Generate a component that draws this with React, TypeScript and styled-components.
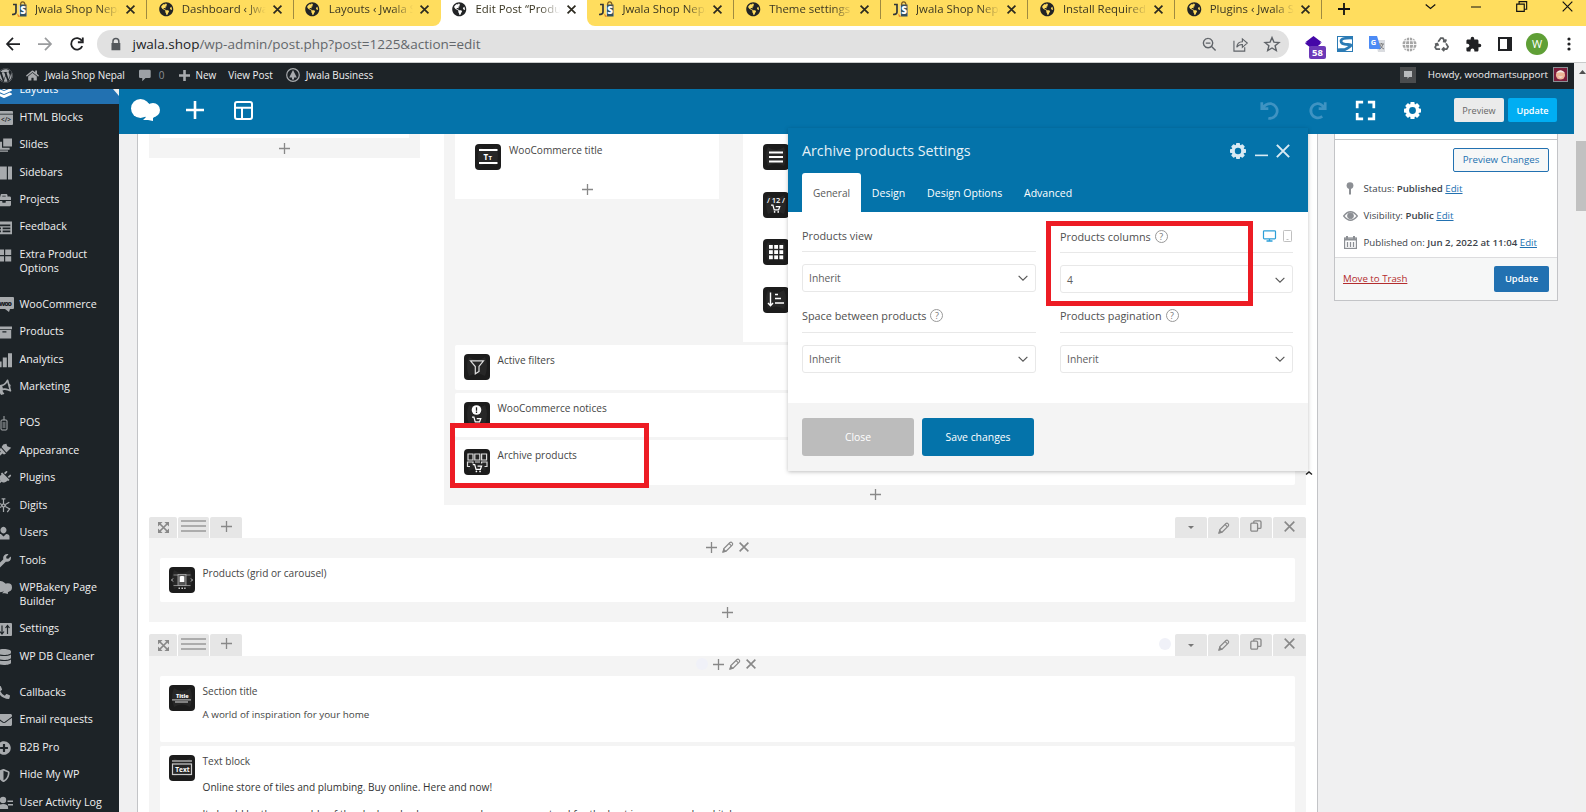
import React from "react";
import styled, { createGlobalStyle, css } from "styled-components";
import {
  FaBullhorn, FaDatabase, FaEnvelope, FaHome, FaLayerGroup, FaPhoneAlt, FaPlug, FaPlusCircle,
  FaShieldAlt, FaWordpress, FaWrench, FaGlobeAmericas, FaBriefcase,
} from "react-icons/fa";
import { MdExtension } from "react-icons/md";

const BLUE = "#0473aa";
const INK = "#1d2327";

const Global = createGlobalStyle`
  * { box-sizing: border-box; }
  body { margin: 0; overflow: hidden; font-family: "Open Sans", "Noto Sans", sans-serif; }
  svg { display: block; flex: none; overflow: visible; }
`;

const Page = styled.div`
  width: 1586px; height: 812px; overflow: hidden; display: flex; flex-direction: column; background: #fff;
`;

/* ---------- browser chrome ---------- */
const TabStrip = styled.div`display: flex; height: 26px; background: #fff; flex: none;`;
const TabGroup = styled.div<{ $side: "left" | "right" }>`
  display: flex; background: #ffdd5e;
  ${(p) => (p.$side === "left" ? "border-radius: 0 0 8px 0;" : "border-radius: 0 0 0 8px; flex: 1;")}
`;
const Tab = styled.div<{ $last?: boolean }>`
  position: relative; display: flex; align-items: center; width: 146.85px; height: 18px; padding-left: 11px; flex: none;
  &::after { content: ""; position: absolute; right: 0; top: 0; width: 1px; height: 19px; background: #9f8a40; display: ${(p) => (p.$last ? "none" : "block")}; }
`;
const TabTitle = styled.span`
  width: 84px; margin: 0 7px 0 8px; overflow: hidden; white-space: nowrap; font-size: 11.4px; line-height: 18px; color: #3b3723;
  mask-image: linear-gradient(90deg, #000 76%, transparent 100%);
`;
const TabIcon = styled.span`width: 16px; display: flex; justify-content: center;`;
const WindowButtons = styled.div`
  display: flex; margin-left: auto; padding: 0 13px 0 0; height: 13px; align-items: center; gap: 35px;
`;
const NewTab = styled.div`display: flex; align-items: center; height: 18px; padding-left: 16px;`;

const Toolbar = styled.div`
  display: flex; align-items: center; height: 37px; flex: none; border-bottom: 1px solid #c9cbcb; background: #fff; padding: 0 9px 0 6px;
`;
const NavButtons = styled.div`display: flex; gap: 18px; width: 93px; align-items: center;`;
const Omnibox = styled.div`
  display: flex; align-items: center; width: 1192px; height: 28px; border-radius: 14px; background: #e1e1e1; padding: 0 9px 0 13px; flex: none;
`;
const Url = styled.span`
  margin-left: 8.5px; font-size: 13.5px; line-height: 20px; color: #63676b; white-space: nowrap; flex: 1;
  b { font-weight: 400; color: #202124; }
`;
const OmniActions = styled.div`display: flex; gap: 16px; align-items: center;`;
const Extensions = styled.div`display: flex; gap: 16px; align-items: center; padding-left: 16px;`;
const ExtSlot = styled.div`position: relative; width: 16px; height: 16px; display: flex; align-items: center; justify-content: center;`;
const Badge = styled.span`
  position: absolute; left: 4px; top: 10px; width: 17px; height: 13px; border-radius: 2px; background: #6c39b8; color: #fff;
  font-size: 9.5px; font-weight: 700; line-height: 13px; text-align: center;
`;
const Profile = styled.div`
  width: 22px; height: 22px; margin: 0 -3px; border-radius: 50%; background: #5f9f36; color: #fff; font-size: 11px; line-height: 22px; text-align: center; flex: none;
`;

/* ---------- page shell ---------- */
const Viewport = styled.div`display: flex; flex: 1; min-height: 0;`;
const Site = styled.div`position: relative; width: 1574px; display: flex; flex-direction: column;`;
const Scrollbar = styled.div`
  width: 12px; background: #f0f0f0; display: flex; flex-direction: column; align-items: flex-end; padding-top: 7px;
`;
const ScrollThumb = styled.div`width: 10px; height: 70px; margin-top: 67px; background: #c1c1c1;`;

const AdminBar = styled.div`
  display: flex; align-items: center; height: 26px; padding-bottom: 1.5px; flex: none; background: ${INK}; color: #f0f0f1; font-size: 9.95px; line-height: 24px; white-space: nowrap;
`;
const AdminItem = styled.div<{ $gap?: number; $at?: number; $dim?: boolean }>`
  display: flex; align-items: center; gap: ${(p) => p.$gap ?? 6}px; margin-right: ${(p) => p.$at ?? 12}px;
  ${(p) => p.$dim && "color: #8c9095;"}
`;
const AccountItem = styled.div`display: flex; align-items: center; margin-left: auto; font-size: 9.8px;`;
const Chat = styled.div`
  width: 16px; height: 16px; margin-right: 12px; background: #4a4c4e; display: flex; align-items: center; justify-content: center;
`;
const Avatar = styled.div`
  width: 15px; height: 15px; margin: 0 6px 1px 5px; border: 1px solid #8c9095; background: #7c1d3b; display: flex; align-items: center; justify-content: center;
`;
const Body = styled.div`display: flex; flex: 1; min-height: 0;`;

/* ---------- admin menu ---------- */
const Sidebar = styled.nav`position: relative; width: 119px; background: ${INK}; overflow: hidden; flex: none;`;
const MenuList = styled.div`margin-top: -12.5px;`;
const MenuItem = styled.div<{ $active?: boolean; $spaced?: boolean }>`
  display: flex; gap: 7px; padding: 6.72px 0 6.72px 2px; margin-left: -7.5px; width: 126.5px;
  font-size: 10.7px; line-height: 13.95px; color: #f0f0f1;
  ${(p) => p.$active && css`background: #2271b1; color: #fff;`}
  ${(p) => p.$spaced && css`margin-top: 8.7px;`}
`;
const MenuIcon = styled.span`
  width: 18px; height: 14px; display: flex; align-items: center; justify-content: center; color: #a7aaad; flex: none;
`;
const MenuNotch = styled.span`
  position: absolute; right: 0; top: 0; width: 0; height: 0; border-style: solid; border-width: 0 6px 7px 0; border-color: transparent #f0f0f1 transparent transparent;
`;

/* ---------- builder ---------- */
const Editor = styled.div`display: flex; flex-direction: column; flex: 1; background: #f0f0f1; overflow: hidden;`;
const BuilderNav = styled.div`
  display: flex; align-items: center; height: 45px; flex: none; background: ${BLUE}; padding: 0 17px 3px 12px;
`;
const NavLeft = styled.div`display: flex; align-items: center; gap: 26px; flex: 1; svg:last-child { margin-left: 3.5px; }`;
const NavRight = styled.div`display: flex; align-items: center; gap: 29px; padding-right: 33px;`;
const NavButton = styled.button<{ $primary?: boolean }>`
  border: 0; padding: 2px 0 0; height: 24px; width: ${(p) => (p.$primary ? 49 : 50)}px; margin-left: ${(p) => (p.$primary ? 4 : 0)}px;
  border-radius: 2px; font: 9.1px/22px "Open Sans", sans-serif; font-weight: ${(p) => (p.$primary ? 600 : 400)};
  background: ${(p) => (p.$primary ? "#00aef3" : "#ebebeb")}; color: ${(p) => (p.$primary ? "#fff" : "#666")};
`;
const Work = styled.div`display: flex; align-items: flex-start; gap: 16px; padding-left: 18px; flex: 1; min-height: 0;`;
const Canvas = styled.main`
  width: 1181px; height: 678px; padding: 0 11px; background: #fff; border: solid #c3c4c7; border-width: 0 1px; overflow: hidden;
`;
const Columns = styled.div`display: flex; gap: 24px; align-items: flex-start;`;
const SideColumn = styled.div`
  width: 271px; height: 24px; padding: 0 11px; background: #f4f4f4; display: flex; flex-direction: column; align-items: center; gap: 5px;
  &::before { content: ""; align-self: stretch; height: 4px; background: #fff; flex: none; }
`;
const MainColumn = styled.div`
  flex: 1; height: 371px; padding: 0 11px; background: #f4f4f4; display: flex; flex-direction: column;
`;
const InnerRow = styled.div`display: flex; gap: 24px; height: 211px; align-items: flex-start;`;
const InnerColumn = styled.div<{ $w: number; $h: number; $gap: number }>`
  width: ${(p) => p.$w}px; height: ${(p) => p.$h}px; background: #fff; padding: 10px 20px 0;
  display: flex; flex-direction: column; gap: ${(p) => p.$gap}px;
`;
const Cards = styled.div<{ $gap: number }>`display: flex; flex-direction: column; gap: ${(p) => p.$gap}px;`;
const Card = styled.section<{ $h: number }>`
  display: flex; gap: 7.5px; height: ${(p) => p.$h}px; padding: 9px; background: #fff; border-radius: 2px; overflow: hidden; flex: none;
`;
const Element = styled.div`display: flex; gap: 8px;`;
const ElementIcon = styled.span`
  width: 26px; height: 26px; border-radius: 4px; background: #1c1c1c; display: flex; align-items: center; justify-content: center; flex: none; overflow: hidden;
`;
const ElementText = styled.div`display: flex; flex-direction: column; white-space: nowrap;`;
const ElementTitle = styled.div`font-size: 10.1px; font-weight: 500; line-height: 12px; height: 13px; color: #454545;`;
const ElementBody = styled.div<{ $top: number; $bold?: boolean }>`
  margin-top: ${(p) => p.$top}px; font-size: ${(p) => (p.$bold ? 10.15 : 9.85)}px; line-height: 14px; color: ${(p) => (p.$bold ? "#333" : "#444")};
`;
const Adder = styled.div<{ $h: number }>`
  display: flex; justify-content: center; align-items: center; height: ${(p) => p.$h}px;
`;
const RowBar = styled.div<{ $h: number }>`
  display: flex; align-items: stretch; gap: 1px; height: ${(p) => p.$h}px; margin-top: 12px;
`;
const RowButton = styled.span<{ $w: number; $lift?: boolean }>`
  width: ${(p) => p.$w}px; background: #e6e6e6; border-radius: 2px 2px 0 0; display: flex; align-items: center; justify-content: center;
  padding-bottom: ${(p) => (p.$lift ? 2.5 : 0)}px;
`;
const RowSpacer = styled.span`flex: 1; display: flex; justify-content: flex-end; align-items: center; padding: 0 3px 3px 0;`;
const Spot = styled.i`width: 12px; height: 12px; border-radius: 50%; background: #f0f1f8; display: block;`;
const RowSection = styled.div`background: #f4f4f4; padding: 0 11px;`;
const ColumnTools = styled.div<{ $spot?: boolean }>`
  display: flex; justify-content: center; align-items: center; gap: 5px; height: 20px; padding-bottom: ${(p) => (p.$spot ? 4 : 2)}px; padding-right: ${(p) => (p.$spot ? 3 : 0)}px;
`;

/* ---------- publish box ---------- */
const Publish = styled.aside`
  width: 224px; height: 167px; border: 1px solid #c3c4c7; border-top: 0; background: #fff; color: #3c434a; font-size: 9.7px; display: flex; flex-direction: column;
  &::before { content: ""; height: 5px; border-bottom: 1px solid #c3c4c7; flex: none; }
`;
const PublishBody = styled.div`flex: 1; padding: 8px 8px 0; display: flex; flex-direction: column;`;
const OutlineButton = styled.button`
  align-self: flex-end; width: 96px; height: 24px; border: 1px solid #2271b1; border-radius: 2px; background: #f6f7f7; color: #2271b1;
  padding: 0; font: 9.7px/20px "Open Sans", sans-serif; margin-bottom: 3px;
`;
const Fact = styled.div`
  display: flex; align-items: center; gap: 6.5px; height: 27px; white-space: nowrap;
  b { font-weight: 550; }
  span:last-child { padding-bottom: 1px; }
`;
const FactIcon = styled.span`width: 14px; display: flex; justify-content: center;`;
const Link = styled.a<{ $danger?: boolean }>`text-decoration: underline; color: ${(p) => (p.$danger ? "#b32d2e" : "#2271b1")};`;
const PublishFoot = styled.div`
  display: flex; justify-content: space-between; align-items: center; height: 43px; border-top: 1px solid #dcdcde; background: #f6f7f7; padding: 0 8px 1px;
`;
const SolidButton = styled.button`
  width: 55px; height: 26px; border: 0; border-radius: 2px; background: #2271b1; color: #fff; padding: 0; font: 600 9.4px/26px "Open Sans", sans-serif;
`;

/* ---------- settings window ---------- */
const Panel = styled.div`
  position: absolute; left: 788px; top: 65px; width: 520px; height: 343px; display: flex; flex-direction: column; background: #fff; box-shadow: 0 1px 4px rgba(0, 0, 0, 0.25);
`;
const PanelHead = styled.header`height: 84px; background: ${BLUE}; padding: 0 15px 0 14px; display: flex; flex-direction: column;`;
const PanelTitle = styled.div`
  display: flex; align-items: center; height: 45px; color: #e6f1f7; font-size: 14.25px; span { flex: 1; }
`;
const PanelTools = styled.div`display: flex; align-items: center; gap: 8.5px; margin-right: 3px;`;
const PanelTabs = styled.div`display: flex; height: 39px;`;
const PanelTab = styled.div<{ $active?: boolean }>`
  padding: 0 10.9px; line-height: 40px; font-size: 10.55px; font-weight: 500; color: #fff; border-radius: 3px 3px 0 0;
  ${(p) => p.$active && css`background: #fff; color: #5a5a5a; font-weight: 400; font-size: 10.1px;`}
`;
const PanelBody = styled.div`
  height: 191px; padding: 0 15px 0 14px; display: grid; grid-template-columns: 234px 233px; column-gap: 24px; grid-template-rows: 81px 81px;
`;
const Field = styled.div<{ $top: number }>`padding-top: ${(p) => p.$top}px;`;
const FieldLabel = styled.div<{ $low?: boolean }>`
  display: flex; align-items: center; gap: 4px; height: 32px; padding-bottom: ${(p) => (p.$low ? 0.5 : 2)}px; border-bottom: 1px solid #e8e8e8; font-size: 10.85px; color: #505050; white-space: nowrap;
`;
const Help = styled.span`
  width: 13px; height: 13px; border: 1px solid #999; border-radius: 50%; font-size: 9px; line-height: 11px; text-align: center; color: #777;
`;
const Devices = styled.span`display: flex; gap: 7px; margin: 0 1px 0 auto; align-items: center;`;
const Select = styled.div<{ $low?: boolean }>`
  display: flex; align-items: center; justify-content: space-between; height: 28px; margin-top: 12px; padding: ${(p) => (p.$low ? 2 : 0)}px 7px 0 6px; border: 1px solid #e8e8e8; border-radius: 3px;
  font-size: 10.3px; color: #606060;
`;
const PanelFoot = styled.footer`flex: 1; background: #f4f4f4; padding: 15px 14px; display: flex; gap: 8px;`;
const PanelButton = styled.button<{ $primary?: boolean }>`
  width: 112px; height: 38px; border: 0; border-radius: 3px; padding: 0; color: #fff; background: ${(p) => (p.$primary ? BLUE : "#bcbcbc")};
  font: 10.4px/38px "Open Sans", sans-serif; font-weight: ${(p) => (p.$primary ? 500 : 400)};
`;
const Highlight = styled.div<{ $x: number; $y: number; $w: number; $h: number }>`
  position: absolute; left: ${(p) => p.$x}px; top: ${(p) => p.$y}px; width: ${(p) => p.$w}px; height: ${(p) => p.$h}px; border: 5px solid #ed1c24;
`;
const Corner = styled.div`position: absolute; left: 1305px; top: 408px;`;

/* ---------- drawings ---------- */
const Stroke = ({ d, s = 16, w = 1.5, c = "currentColor" }: { d: string; s?: number; w?: number; c?: string }) => (
  <svg width={s} height={s} viewBox="0 0 16 16" fill="none" stroke={c} strokeWidth={w}><path d={d} /></svg>
);
const Fill = ({ d, s = 18, c = "currentColor", vb = 20 }: { d: string; s?: number; c?: string; vb?: number }) => (
  <svg width={s} height={s} viewBox={`0 0 ${vb} ${vb}`} fill={c} fillRule="evenodd"><path d={d} /></svg>
);
const Plus = ({ s = 11, c = "#888", w = 1.3 }: { s?: number; c?: string; w?: number }) => <Stroke d="M8 0V16M0 8H16" s={s} w={(w * 16) / s} c={c} />;
const Cross = ({ s = 10, c = "#888", w = 1.6 }: { s?: number; c?: string; w?: number }) => <Stroke d="M1 1L15 15M15 1L1 15" s={s} w={(w * 16) / s} c={c} />;
const Chevron = () => <Stroke d="M1 4.5L8 11.5L15 4.5" s={10} w={1.8} c="#555" />;
const Pencil = () => (
  <svg width="12" height="12" viewBox="0 0 12 12" fill="none" stroke="#888" strokeWidth="1.2">
    <path d="M1.2 10.8L1.9 7.6L8 1.5Q9 .6 10 1.6Q11.2 2.6 10.4 3.8L4.3 9.9Z" /><path d="M1 11L3.6 10.4L1.8 8.4Z" fill="#888" /><path d="M7.2 2.6L9.2 4.6" />
  </svg>
);
const Copy = () => (
  <svg width="12" height="12" viewBox="0 0 12 12" fill="none" stroke="#888" strokeWidth="1.3">
    <rect x=".8" y="3.2" width="6.8" height="8" rx="1.2" /><path d="M3.8 3V2Q3.8 .8 5 .8H9.8Q11 .8 11 2V7.2Q11 8.4 9.8 8.4H7.8" />
  </svg>
);
const Expand = () => (
  <svg width="11" height="11" viewBox="0 0 11 11" fill="#888" stroke="#888">
    <path d="M2 2L9 9M9 2L2 9" strokeWidth="1.7" /><path stroke="none" d="M0 0H4.6L0 4.6ZM11 0V4.6L6.4 0ZM0 11V6.4L4.6 11ZM11 11H6.4L11 6.4Z" />
  </svg>
);
const Lines = () => <svg width="25" height="12" stroke="#999" strokeWidth="1.3"><path d="M0 1H25M0 6H25M0 11H25" /></svg>;
const Gear = ({ s, c }: { s: number; c: string }) => (
  <svg width={s} height={s} viewBox="-8 -8 16 16" fill={c}>
    {[0, 45, 90, 135].map((a) => <rect key={a} x="-2" y="-8" width="4" height="16" rx=".8" transform={`rotate(${a})`} />)}
    <circle r="4.6" fill="none" stroke={c} strokeWidth="3.6" /><circle r="3.2" fill={BLUE} />
  </svg>
);
const Bakery = ({ w, c }: { w: number; c: string }) => (
  <svg width={w} height={w * 0.76} viewBox="0 0 29 22" fill={c}>
    <circle cx="9.5" cy="9.5" r="9.5" /><circle cx="22" cy="11" r="7" /><path d="M8 15L22 8L25 17L22 19V22L17 21L12 21L15 18Z" /><circle cx="15" cy="8" r="4.5" />
  </svg>
);
const Globe = () => <FaGlobeAmericas size={14.5} color="#222426" />;
const JsLogo = () => (
  <svg width="17" height="16" viewBox="0 0 17 16">
    <path d="M7.500 4L15 3L16 15H8.500Z" fill="#d9d4bd" /><path d="M9 3.500H15.500V15.500H9Z" fill="#33505f" /><path d="M9.500 4.500Q9.500 .8 11.700 .8T14 4.500" fill="none" stroke="#7b5a20" strokeWidth="1.300" />
    <path d="M6 12.500L9.500 15.500L7 16Z" fill="#e8892c" />
    <path d="M2 3.500H5V11Q5 13.500 1 13.500" fill="none" stroke="#33373a" strokeWidth="1.700" />
    <text x="9.300" y="13" fontSize="10" fontWeight="800" fontFamily="Open Sans, sans-serif" fill="#fff">S</text>
  </svg>
);
const Cart = ({ x, y, k = 1 }: { x: number; y: number; k?: number }) => (
  <g transform={`translate(${x} ${y}) scale(${k})`}>
    <path d="M0 .7H2L3.4 5.6H8L9.2 2.3H5" fill="none" stroke="#fff" strokeWidth="1.3" /><circle cx="3.8" cy="7.8" r=".9" fill="#fff" /><circle cx="7.6" cy="7.8" r=".9" fill="#fff" />
  </g>
);
const art: Record<string, React.ReactNode> = {
  title: <><path d="M4 6H22.5M4 19H22.5" stroke="#fff" strokeWidth="2" /><text x="8.5" y="16" fontSize="8" fontWeight="700" fill="#fff">T</text><text x="13.5" y="16" fontSize="6" fontWeight="700" fill="#fff">T</text></>,
  menu: <path d="M6 8.5H20M6 13H20M6 17.5H20" stroke="#fff" strokeWidth="2" />,
  count: <><text x="4" y="10.5" fontSize="7.6" fontWeight="600" fill="#fff" textLength="18">/ 12 /</text><Cart x={8} y={12.5} k={0.95} /></>,
  grid: <>{[6, 11.2, 16.4].map((x) => [6, 11.2, 16.4].map((y) => <rect key={x + "-" + y} x={x} y={y} width="3.8" height="3.8" fill="#fff" />))}</>,
  sort: <path d="M7.5 5.5V18.5M5 16L7.5 18.7L10 16M12 7.5H15M12 11.5H18M12 16H21" fill="none" stroke="#fff" strokeWidth="1.4" />,
  filter: <path d="M6.5 6.8H19.5L15 12.5V17.5L11.3 19.8V12.5Z" fill="none" stroke="#ddd" strokeWidth="1.2" />,
  notice: <><circle cx="12.5" cy="8" r="4.8" fill="#fff" /><path d="M12.5 5.2V8.8M12.5 9.6V11" stroke="#1c1c1c" strokeWidth="1.3" /><Cart x={8} y={14.5} k={0.95} /></>,
  archive: <><path d="M4 5H9V11H4ZM10.8 5H15.8V11H10.8ZM17.6 5H22.6V11H17.6ZM3.500 18V13H9V14.500M11 13H16M23 18V13H17.600V14.500M3.500 17.500H6M20.500 17.500H23" fill="none" stroke="#ddd" strokeWidth="1.2" /><Cart x={8.8} y={15} k={0.95} /></>,
  carousel: <><path d="M4.5 8H21.5M4.5 18.5H21.5" stroke="#888" /><rect x="9" y="7.5" width="8" height="11" fill="#555" stroke="#aaa" strokeWidth=".8" /><path d="M10.7 9.5L12 9L14 9L15.3 9.5V15H10.7Z" fill="#fff" /><path d="M4 11.5L2.5 13L4 14.5M22 11.5L23.5 13L22 14.5" fill="none" stroke="#ccc" /><path d="M9.5 21.3H11M12.4 21.3H14M15.2 21.3H16.6" stroke="#ccc" strokeWidth="1.5" /></>,
  section: <><text x="7" y="12.5" fontSize="5.5" fontWeight="800" fill="#fff">Title</text><path d="M3 14.8H22" stroke="#aaa" strokeWidth="1.2" /><path d="M6 17H19" stroke="#ddd" strokeWidth="1.2" /></>,
  text: <><path d="M3 6H23" stroke="#aaa" strokeWidth="1.6" /><rect x="3.5" y="9" width="19" height="10.5" fill="none" stroke="#ccc" strokeWidth="1.2" /><text x="6.3" y="17" fontSize="6.6" fontWeight="700" fill="#fff">Text</text></>,
};
const ElIcon = ({ kind }: { kind: string }) => (
  <ElementIcon><svg width="26" height="26" viewBox="0 0 26 26" fontFamily="Open Sans, sans-serif"><path d="M5 3Q13 9 21 3Q25 12 21 22Q13 17 5 22Q1 12 5 3Z" fill="#272727" />{art[kind]}</svg></ElementIcon>
);

/* ---------- data ---------- */
const menu: { label: string; icon: React.ReactNode; active?: boolean; spaced?: boolean }[] = [
  { label: "Layouts", icon: <FaLayerGroup size={16} color="#fff" />, active: true },
  { label: "HTML Blocks", icon: <svg width="18" height="14" viewBox="0 0 18 14"><rect width="18" height="14" rx="1" fill="#a7aaad" /><path d="M0 3.2H18" stroke={INK} strokeWidth=".8" /><text x="6" y="11" fontSize="6.5" fontWeight="600" fill={INK}>{"</>"}</text></svg> },
  { label: "Slides", icon: <Fill d="M9 2H20V12H9ZM5 6H7.500V13.500H17V16H5ZM0 17H15V18.500H0Z" s={16} /> },
  { label: "Sidebars", icon: <Fill d="M2 2H13.500V18H2ZM15 2H20V18H15Z" s={16} /> },
  { label: "Projects", icon: <FaBriefcase size={14} /> },
  { label: "Feedback", icon: <Fill d="M1 3H20V18H1ZM3 6.500V8.500H18V6.500ZM3 10V12H7V10ZM9 10V12H18V10ZM3 13.500V15.500H7V13.500ZM9 13.500V15.500H18V13.500Z" s={17} /> },
  { label: "Extra Product Options", icon: <Fill d="M2 3H10V10H2ZM11.500 3H19V10H11.500ZM2 11.500H10V18H2ZM11.500 11.500H19V18H11.500Z" s={16} /> },
  { label: "WooCommerce", spaced: true, icon: <svg width="20" height="15" viewBox="0 0 20 15"><path d="M1 0H19Q20 0 20 1V11Q20 12 19 12H16L15 15L11 12H1Z" fill="#a7aaad" /><text x="5" y="8.500" fontSize="7" fontWeight="800" fill={INK} textLength="13">woo</text></svg> },
  { label: "Products", icon: <Fill d="M1 3H20V6.500H1ZM2 7.500H19V18H2ZM8 9.200V10.500H13V9.200Z" s={16} /> },
  { label: "Analytics", icon: <Fill d="M2 12H7V19H2ZM8.500 7H13.500V19H8.500ZM15 1.500H20V19H15Z" s={16} /> },
  { label: "Marketing", icon: <FaBullhorn size={15} style={{ transform: "rotate(-15deg)" }} /> },
  { label: "POS", spaced: true, icon: <svg width="8" height="15" viewBox="0 0 8 15"><rect x="1" y="4" width="6" height="10" rx="1" fill="none" stroke="#a7aaad" /><path d="M4 0V4M2.500 7H5.500M2.500 9H5.500M2.500 11H5.500" stroke="#a7aaad" /></svg> },
  { label: "Appearance", icon: <Fill d="M9 2L13 1L14 4L19 6L13 12L7 5ZM6 6L12.500 13L10 14.500L8 13L2 19L0 17L6 11L4.500 8.500Z" s={16} /> },
  { label: "Plugins", icon: <FaPlug size={14} style={{ transform: "rotate(45deg)" }} /> },
  { label: "Digits", icon: <Stroke d="M8 1V6M8 10V15M1.800 4.500L6 7M10 9L14.200 11.500M14.200 4.500L10 7M6 9L1.800 11.500M6 1H10M1 11L4 15M15 11L12 15M8 6L10 8L8 10L6 8Z" s={15} w={1.3} /> },
  { label: "Users", icon: <Fill d="M10 1A4 4.500 0 1 1 9.900 1ZM2 18V14Q2 10.500 6.500 10.500L10 14L13.500 10.500Q18 10.500 18 14V18Z" s={15} /> },
  { label: "Tools", icon: <FaWrench size={14} /> },
  { label: "WPBakery Page Builder", icon: <Bakery w={17} c="#a7aaad" /> },
  { label: "Settings", icon: <svg width="17" height="15" viewBox="0 0 17 15"><rect width="17" height="13" y="1" rx="1" fill="#a7aaad" /><path d="M7 3.500V12M5 9.500L7 12L9 9.500M12.500 12V3.500M10.500 6L12.500 3.500L14.500 6" fill="none" stroke={INK} strokeWidth="1.200" /></svg> },
  { label: "WP DB Cleaner", icon: <FaDatabase size={16} /> },
  { label: "Callbacks", spaced: true, icon: <FaPhoneAlt size={13} /> },
  { label: "Email requests", icon: <FaEnvelope size={16} /> },
  { label: "B2B Pro", icon: <FaPlusCircle size={14} /> },
  { label: "Hide My WP", icon: <FaShieldAlt size={13} /> },
  { label: "User Activity Log", icon: <svg width="18" height="14" viewBox="0 0 18 14" fill="#a7aaad"><circle cx="8" cy="4" r="3.200" /><path d="M2 13Q2 8 8 8T13 13Z" /><path d="M12.500 4.500H18V6H12.500ZM13 8H18V9.500H13Z" /></svg> },
];

const BrowserTab = ({ title, js, last }: { title: string; js?: boolean; last?: boolean }) => (
  <Tab $last={last}><TabIcon>{js ? <JsLogo /> : <Globe />}</TabIcon><TabTitle>{title}</TabTitle><Cross s={9} c="#2c2a20" w={1.7} /></Tab>
);

const BuilderRow = ({ h, spot, children }: { h: number; spot?: boolean; children: React.ReactNode }) => (
  <>
    <RowBar $h={h}>
      <RowButton $w={28}><Expand /></RowButton>
      <RowButton $w={31} $lift><Lines /></RowButton>
      <RowButton $w={32} $lift><Plus /></RowButton>
      <RowSpacer>{spot && <Spot />}</RowSpacer>
      <RowButton $w={32}><svg width="6" height="3"><path d="M0 0H6L3 3Z" fill="#777" /></svg></RowButton>
      <RowButton $w={31}><Pencil /></RowButton>
      <RowButton $w={32} $lift><Copy /></RowButton>
      <RowButton $w={33} $lift><Cross s={11} /></RowButton>
    </RowBar>
    <RowSection>
      <ColumnTools $spot={spot}>{spot && <Spot />}<Plus /><Pencil /><Cross s={10} /></ColumnTools>
      {children}
    </RowSection>
  </>
);

const Pick = ({ label, value, top, help, devices, low }: { label: string; value: string; top: number; help?: boolean; devices?: boolean; low?: boolean }) => (
  <Field $top={top}>
    <FieldLabel $low={low}>
      {label}{help && <Help>?</Help>}
      {devices && (
        <Devices>
          <svg width="13" height="12" fill="none" stroke="#2d9fd8"><rect x=".5" y=".8" width="12" height="8" rx=".8" strokeWidth="1.2" /><path d="M3.5 11H9.5M6.5 9V11" strokeWidth="1.3" /></svg>
          <svg width="9" height="12" fill="none" stroke="#c0c0c0"><rect x=".5" y=".5" width="8" height="11" rx=".8" /><path d="M3.5 9.5H5.5" /></svg>
        </Devices>
      )}
    </FieldLabel>
    <Select $low={devices}>{value}<Chevron /></Select>
  </Field>
);

export default function App() {
  return (
    <Page>
      <Global />
      <TabStrip>
        <TabGroup $side="left">
          <BrowserTab title="Jwala Shop Nepal" js /><BrowserTab title="Dashboard ‹ Jwala" /><BrowserTab title="Layouts ‹ Jwala Shop" last />
        </TabGroup>
        <BrowserTab title="Edit Post “Products" last />
        <TabGroup $side="right">
          <BrowserTab title="Jwala Shop Nepal" js /><BrowserTab title="Theme settings" /><BrowserTab title="Jwala Shop Nepal" js />
          <BrowserTab title="Install Required" /><BrowserTab title="Plugins ‹ Jwala Shop" />
          <NewTab><Plus s={12} c="#111" w={1.8} /></NewTab>
          <WindowButtons>
            <Stroke d="M1 5L8 11L15 5" s={11} w={1.7} c="#111" />
            <Stroke d="M0 8H16" s={10} w={1.6} c="#111" />
            <Stroke d="M1 4.5H12V15H1ZM4.5 4V1H15.5V12H12" s={11} w={1.7} c="#111" />
            <Cross s={11} c="#111" w={1.2} />
          </WindowButtons>
        </TabGroup>
      </TabStrip>
      <Toolbar>
        <NavButtons>
          <Stroke d="M16 8H1.5M8 1L1.2 8L8 15" s={14} w={2} c="#202124" />
          <Stroke d="M0 8H14.5M8 1L14.8 8L8 15" s={14} w={2} c="#9a9c9e" />
          <Stroke d="M14 10.5A6.6 6.6 0 1 1 13.5 4.2M14.6 .5V6H9" s={14} w={2.1} c="#202124" />
        </NavButtons>
        <Omnibox>
          <Fill d="M3 8V6A5 5 0 0 1 13 6V8H14V18H2V8ZM5 8H11V6A3 3 0 0 0 5 6Z" s={14} vb={19} c="#54585c" />
          <Url><b>jwala.shop</b>/wp-admin/post.php?post=1225&amp;action=edit</Url>
          <OmniActions>
            <Stroke d="M6.5 1.5A5 5 0 1 1 6.4 1.5M10.2 10.2L14.500 14.500M4 6.5H9" s={15} w={1.5} c="#5f6368" />
            <Stroke d="M1 4V15H12.5V11M4 11Q4.5 5 10 5V2L15.2 6.5L10 11V8Q6 7.8 4 11Z" s={15} w={1.2} c="#5f6368" />
            <Stroke d="M8 1.5L9.9 6.1L15 6.5L11.1 9.7L12.3 14.6L8 12L3.7 14.6L4.9 9.7L1 6.5L6.1 6.1Z" w={1.4} c="#5f6368" />
          </OmniActions>
        </Omnibox>
        <Extensions>
          <ExtSlot><Fill d="M8 0L16 6H14L15 7L8 13L0 7L2 6H0Z" s={17} vb={16} c="#4508a8" /><Badge>58</Badge></ExtSlot>
          <ExtSlot><svg width="16" height="16"><rect x=".5" y=".5" width="15" height="15" fill="#fff" stroke="#2b7bb5" /><path d="M16 2Q4 1.5 4 5T11 8.500T8 13.500L0 14" fill="none" stroke="#2b7bb5" strokeWidth="2.8" /></svg></ExtSlot>
          <ExtSlot><svg width="16" height="16"><path d="M6 4H16V16H9Z" fill="#dadce0" /><path d="M0 0H8L12 13H1Q0 13 0 12Z" fill="#4c8bf5" /><text x="1.800" y="9" fontSize="7.500" fontWeight="700" fill="#fff">G</text><path d="M10 8H15M12.500 7V8M14 8Q13 12 10.500 13M11 9Q12 12 15 13" fill="none" stroke="#777" strokeWidth=".9" /></svg></ExtSlot>
          <ExtSlot><svg width="15" height="15" viewBox="-8 -8 16 16"><circle r="7.500" fill="#a5a5a5" /><path d="M-8 0H8M0 -8V8M-7 -4H7M-7 4H7M-3 -7Q-6 0 -3 7M3 -7Q6 0 3 7" fill="none" stroke="#fff" strokeWidth=".9" /></svg></ExtSlot>
          <ExtSlot><Stroke d="M4.500 5L7.200 1.300H9.500L11.500 4.500M12.800 6.800L15 10.500L13.500 13H9.500M6.500 13H2.500L1.200 10.800L3.200 7.200M9.500 4.600L12 5L13 2.500M11 11L9 13L11 15M1 7.800L3.500 7L4.700 9.300" s={15} w={1.900} c="#5c5f61" /></ExtSlot>
          <ExtSlot><MdExtension size={17} color="#202124" /></ExtSlot>
          <ExtSlot><svg width="14" height="14"><rect x="1" y="1" width="12" height="12" fill="#fff" stroke="#202124" strokeWidth="2" /><path d="M9 1H13V13H9Z" fill="#202124" /></svg></ExtSlot>
          <ExtSlot><Profile>W</Profile></ExtSlot>
          <ExtSlot><svg width="4" height="14" fill="#202124"><circle cx="2" cy="2" r="1.600" /><circle cx="2" cy="7" r="1.600" /><circle cx="2" cy="12" r="1.600" /></svg></ExtSlot>
        </Extensions>
      </Toolbar>
      <Viewport>
        <Site>
          <AdminBar>
            <AdminItem $at={13}><FaWordpress size={15} color="#a7aaad" style={{ marginLeft: -2 }} /></AdminItem>
            <AdminItem $at={14}><FaHome size={13} color="#a7aaad" />Jwala Shop Nepal</AdminItem>
            <AdminItem $at={14} $dim $gap={7}><Fill d="M2 1H16Q18 1 18 3V12Q18 14 16 14H10L5 19V14H2Q0 14 0 12V3Q0 1 2 1Z" s={13} c="#9ca1a6" />0</AdminItem>
            <AdminItem><Plus s={11} c="#a7aaad" w={2.6} />New</AdminItem>
            <AdminItem $at={13}>View Post</AdminItem>
            <AdminItem><svg width="14" height="14" viewBox="-7 -7 14 14"><circle r="6.300" fill="none" stroke="#a7aaad" strokeWidth="1.200" /><path d="M0 -5L3.800 2.500H1V4.500H-1V2.500H-3.800Z" fill="#a7aaad" /></svg>Jwala Business</AdminItem>
            <AccountItem>
              <Chat><Fill d="M2 2H18V14H12L9 18V14H2Z" s={10} c="#b9bbbd" /></Chat>
              Howdy, woodmartsupport
              <Avatar><svg width="11" height="11"><circle cx="5.500" cy="6" r="4.600" fill="#edb596" /><path d="M1 4Q5.500 -1.500 10 4Q5.500 2.500 1 4ZM3 7.500Q5.500 9.800 8 7.500" fill="#f3eee9" /></svg></Avatar>
            </AccountItem>
          </AdminBar>
          <Body>
            <Sidebar>
              <MenuList>
                {menu.map((m) => (
                  <MenuItem key={m.label} $active={m.active} $spaced={m.spaced}><MenuIcon>{m.icon}</MenuIcon>{m.label}</MenuItem>
                ))}
              </MenuList>
              <MenuNotch />
            </Sidebar>
            <Editor>
              <BuilderNav>
                <NavLeft>
                  <Bakery w={29} c="#fff" />
                  <Plus s={18} c="#fff" w={2.6} />
                  <svg width="19" height="19" fill="none" stroke="#fff" strokeWidth="2"><rect x="1" y="1" width="17" height="17" rx="2" /><path d="M1 6.800H18M8 7V18" /></svg>
                </NavLeft>
                <NavRight>
                  <Stroke d="M1.500 1V6.500H7M2 6Q5 2 9.500 2.300A6 6 0 1 1 7 14.500" s={19} w={2.300} c="#3f93c2" />
                  <Stroke d="M14.500 1V6.500H9M14 6Q11 2 7.500 2.300A6 6 0 1 0 12 13" s={19} w={2.300} c="#3f93c2" />
                  <Stroke d="M1 6V1H6M10 1H15V6M15 10V15H10M6 15H1V10" s={19} w={2.300} c="#fff" />
                  <Gear s={17} c="#fff" />
                </NavRight>
                <NavButton>Preview</NavButton>
                <NavButton $primary>Update</NavButton>
              </BuilderNav>
              <Work>
                <Canvas>
                  <Columns>
                    <SideColumn><Plus /></SideColumn>
                    <MainColumn>
                      <InnerRow>
                        <InnerColumn $w={264} $h={65} $gap={19}>
                          <Element><ElIcon kind="title" /><ElementText><ElementTitle>WooCommerce title</ElementTitle></ElementText></Element>
                          <Adder $h={0}><Plus /></Adder>
                        </InnerColumn>
                        <InnerColumn $w={552} $h={208} $gap={21.6}>
                          <ElIcon kind="menu" /><ElIcon kind="count" /><ElIcon kind="grid" /><ElIcon kind="sort" />
                        </InnerColumn>
                      </InnerRow>
                      <Cards $gap={3}>
                        <Card $h={45}><ElIcon kind="filter" /><ElementTitle>Active filters</ElementTitle></Card>
                        <Card $h={44}><ElIcon kind="notice" /><ElementTitle>WooCommerce notices</ElementTitle></Card>
                        <Card $h={45}><ElIcon kind="archive" /><ElementTitle>Archive products</ElementTitle></Card>
                      </Cards>
                      <Adder $h={18}><Plus /></Adder>
                    </MainColumn>
                  </Columns>
                  <BuilderRow h={21}>
                    <Card $h={44}><ElIcon kind="carousel" /><ElementText><ElementTitle>Products (grid or carousel)</ElementTitle></ElementText></Card>
                    <Adder $h={20}><Plus /></Adder>
                  </BuilderRow>
                  <BuilderRow h={22} spot>
                    <Cards $gap={4}>
                      <Card $h={66}>
                        <ElIcon kind="section" />
                        <ElementText><ElementTitle>Section title</ElementTitle><ElementBody $top={9}>A world of inspiration for your home</ElementBody></ElementText>
                      </Card>
                      <Card $h={100}>
                        <ElIcon kind="text" />
                        <ElementText>
                          <ElementTitle>Text block</ElementTitle>
                          <ElementBody $top={12} $bold>Online store of tiles and plumbing. Buy online. Here and now!</ElementBody>
                          <ElementBody $top={13} $bold>It should be the ensemble of the sleek and colour ranges where you can stand for the best in a new modern kitchen</ElementBody>
                        </ElementText>
                      </Card>
                    </Cards>
                  </BuilderRow>
                </Canvas>
                <Publish>
                  <PublishBody>
                    <OutlineButton>Preview Changes</OutlineButton>
                    <Fact><FactIcon><svg width="8" height="13" fill="#8c8f94"><circle cx="4" cy="3.600" r="3.400" /><path d="M3 6H5V12L4 13L3 12Z" /></svg></FactIcon><span>Status: <b>Published</b> <Link>Edit</Link></span></Fact>
                    <Fact><FactIcon><svg width="15" height="10" fill="none" stroke="#8c8f94"><path d="M.7 5Q7.500 -3.500 14.300 5Q7.500 13.500 .7 5Z" strokeWidth="1.300" /><circle cx="7.500" cy="4.800" r="2.900" fill="#8c8f94" /></svg></FactIcon><span>Visibility: <b>Public</b> <Link>Edit</Link></span></Fact>
                    <Fact><FactIcon><svg width="13" height="13" stroke="#8c8f94" fill="none"><rect x=".6" y="2" width="11.800" height="10.400" strokeWidth="1.200" /><path d="M.5 3.600H12.500M3 0V4M10 0V4" strokeWidth="2" /><path d="M3.500 6V11M6.500 6V11M9.500 6V11" strokeWidth="1.300" /></svg></FactIcon><span>Published on: <b>Jun 2, 2022 at 11:04</b> <Link>Edit</Link></span></Fact>
                  </PublishBody>
                  <PublishFoot><Link $danger>Move to Trash</Link><SolidButton>Update</SolidButton></PublishFoot>
                </Publish>
              </Work>
            </Editor>
          </Body>
          <Panel>
            <PanelHead>
              <PanelTitle>
                <span>Archive products Settings</span>
                <PanelTools>
                  <Gear s={16} c="#d9eaf3" />
                  <Stroke d="M0 14H16" s={13} w={2} c="#d9eaf3" />
                  <Cross s={14} c="#d9eaf3" w={2} />
                </PanelTools>
              </PanelTitle>
              <PanelTabs><PanelTab $active>General</PanelTab><PanelTab>Design</PanelTab><PanelTab>Design Options</PanelTab><PanelTab>Advanced</PanelTab></PanelTabs>
            </PanelHead>
            <PanelBody>
              <Pick label="Products view" value="Inherit" top={8} low />
              <Pick label="Products columns" value="4" top={9} help devices low />
              <Pick label="Space between products" value="Inherit" top={8} help />
              <Pick label="Products pagination" value="Inherit" top={8} help />
            </PanelBody>
            <PanelFoot><PanelButton>Close</PanelButton><PanelButton $primary>Save changes</PanelButton></PanelFoot>
          </Panel>
          <Corner><svg width="8" height="4"><path d="M1 3.500L4 1L7 3.500" fill="none" stroke="#222" strokeWidth="1.500" /></svg></Corner>
          <Highlight $x={450} $y={360} $w={199} $h={65} />
          <Highlight $x={1046} $y={158} $w={207} $h={85} />
        </Site>
        <Scrollbar>
          <svg width="7" height="4"><path d="M0 4L3.500 0L7 4Z" fill="#505050" /></svg>
          <ScrollThumb />
        </Scrollbar>
      </Viewport>
    </Page>
  );
}
